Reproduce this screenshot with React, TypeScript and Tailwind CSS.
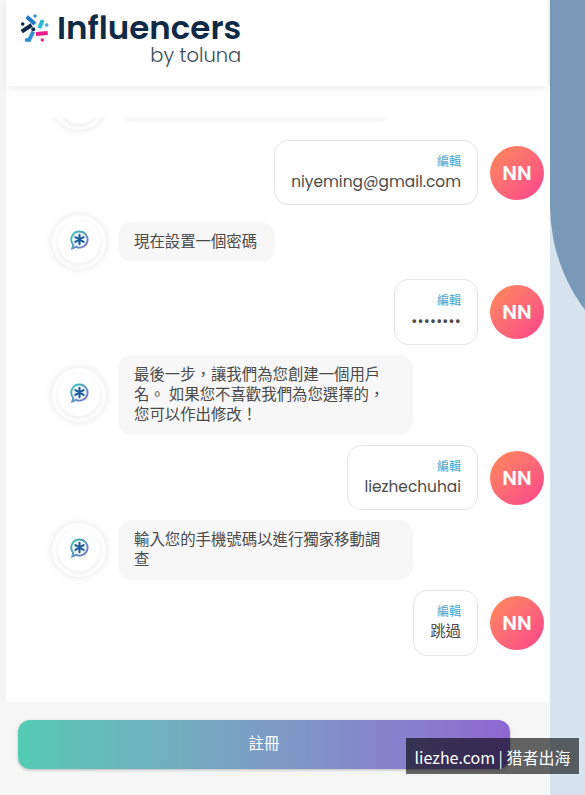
const cjk = "font-['Poppins','Inter','Noto_Sans_CJK_TC',sans-serif]";

function LogoMark() {
  return (
    <svg width='30' height='32' viewBox='0 0 30 32' className='mt-[3px] shrink-0'>
      <g strokeWidth='4' fill='none'>
        <path d='M6.7 2.7 15 10' stroke='#1f78c8' />
        <path d='M1.7 17.7 11.7 11' stroke='#0f2a47' />
        <path d='M19.3 14.3 22.7 6' stroke='#27bcd4' />
        <path d='M8.3 27.7 13.3 17.7' stroke='#2f8fd0' />
        <path d='M16 20 27.7 19' stroke='#e91e8c' />
      </g>
      <circle cx='15' cy='2' r='1.7' fill='#2f8fd0' />
      <circle cx='2.7' cy='10' r='1.8' fill='#0f2a47' />
      <circle cx='13.3' cy='15.3' r='2' fill='#0f2a47' />
      <circle cx='26.7' cy='11' r='1.8' fill='#4aa8d8' />
      <circle cx='6.7' cy='26' r='2' fill='#2f8fd0' />
      <circle cx='22.3' cy='26' r='1.7' fill='#e91e8c' />
    </svg>
  );
}

function BotAvatar() {
  return (
    <div className='flex h-[54px] w-[54px] shrink-0 items-center justify-center rounded-full bg-white shadow-[0_0_9px_rgba(0,0,0,0.1)]'>
      <div className='flex h-[42px] w-[42px] items-center justify-center rounded-full bg-white shadow-[0_2px_6px_rgba(0,0,0,0.08)]'>
        <svg width='19' height='20' viewBox='0 0 20 21' className='mb-[4px]'>
          <defs>
            <linearGradient id='botRing' x1='0' y1='0' x2='1' y2='1'>
              <stop offset='0' stopColor='#39c3b4' />
              <stop offset='1' stopColor='#7f6bd0' />
            </linearGradient>
          </defs>
          <path d='M10 1.5a8.5 8.5 0 1 1-3.6 16.2L2.4 19.4l1-3.9A8.5 8.5 0 0 1 10 1.5Z' fill='#eef6fa' stroke='url(#botRing)' strokeWidth='2' />
          <path d='M10 5v10M5.7 7.5l8.6 5M14.3 7.5l-8.6 5' stroke='#1c5a9e' strokeWidth='2.2' strokeLinecap='round' />
        </svg>
      </div>
    </div>
  );
}

function BotRow({ children, width }: { children: React.ReactNode; width: string }) {
  return (
    <div className='flex items-center gap-3 pl-[46px]'>
      <BotAvatar />
      <div className={`rounded-[14px] bg-[#f7f7f7] py-[10px] pl-[16px] pr-[18px] text-[15.4px] leading-[20px] text-[#4a4a4a] ${width}`}>{children}</div>
    </div>
  );
}

function UserRow({ children, height }: { children: React.ReactNode; height: string }) {
  return (
    <div className='flex items-center justify-end gap-3 pr-[6px]'>
      <div className={`flex flex-col items-end rounded-[14px] border border-[#e4e4e4] bg-white px-[16px] pt-[13px] text-[15.4px] text-[#4a4a4a] ${height}`}>
        <span className='text-[12px] leading-[16px] text-[#4a9fc9]'>編輯</span>
        {children}
      </div>
      <div className='flex h-[54px] w-[54px] shrink-0 items-center justify-center rounded-full bg-gradient-to-br from-[#fd8a55] to-[#fb3f8d] text-[20px] font-semibold text-white'>
        NN
      </div>
    </div>
  );
}

export default function App() {
  return (
    <div className={`relative flex h-[795px] w-[585px] overflow-hidden bg-[#f6f6f6] ${cjk}`}>
      <div className='flex w-[550px] shrink-0 flex-col pl-[6px]'>
        <div className='relative z-10 flex h-[86px] w-[542px] items-start bg-white pl-[14px] pt-[11px] shadow-[0_2px_8px_rgba(0,0,0,0.08)]'>
          <LogoMark />
          <div className='ml-[7px] flex flex-col items-end'>
            <span className='text-[32.5px] font-semibold leading-[34px] text-[#0f2a47]'>Influencers</span>
            <span className='text-[19.5px] font-light leading-[22px] text-[#3b4a5c]'>by toluna</span>
          </div>
        </div>
        <div className='relative h-[616px] overflow-hidden bg-white'>
          <div className='absolute inset-x-0 top-0 z-[1] h-[33px] bg-gradient-to-b from-white from-90% to-white/0' />
          <div className='-mt-[10px] flex flex-col gap-[10px]'>
            <BotRow width='h-[38px] w-[274px]'>{''}</BotRow>
            <UserRow height='h-[65px]'>
              <span className='leading-[24px]'>niyeming@gmail.com</span>
            </UserRow>
            <BotRow width='h-[40px]'>現在設置一個密碼</BotRow>
            <UserRow height='h-[66px]'>
              <span className='text-[12px] font-bold leading-[24px] tracking-[0.2px]'>••••••••</span>
            </UserRow>
            <BotRow width='w-[295px]'>最後一步，讓我們為您創建一個用戶名。 如果您不喜歡我們為您選擇的，您可以作出修改！</BotRow>
            <UserRow height='h-[65px]'>
              <span className='leading-[24px]'>liezhechuhai</span>
            </UserRow>
            <BotRow width='w-[295px]'>輸入您的手機號碼以進行獨家移動調查</BotRow>
            <UserRow height='h-[66px]'>
              <span className='leading-[24px]'>跳過</span>
            </UserRow>
          </div>
        </div>
        <div className='ml-[12px] mt-[18px] flex h-[49px] w-[492px] items-center justify-center rounded-[12px] bg-gradient-to-r from-[#53cbb3] to-[#8e67d2] pb-[2px] text-[15.4px] text-white shadow-[0_1px_3px_rgba(0,0,0,0.25)]'>
          註冊
        </div>
      </div>
      <div className='w-[35px] overflow-hidden bg-[#d6e4ef]'>
        <div className='h-[380px] w-[200px] rounded-bl-[175px] bg-[#7a99b9]' />
      </div>
      <div className="absolute left-[406px] top-[738px] flex h-[36px] w-[173px] items-center justify-center bg-black/60 pt-px font-['Noto_Sans_CJK_SC',sans-serif] text-[16px] text-white">
        liezhe.com | 猎者出海
      </div>
    </div>
  );
}
